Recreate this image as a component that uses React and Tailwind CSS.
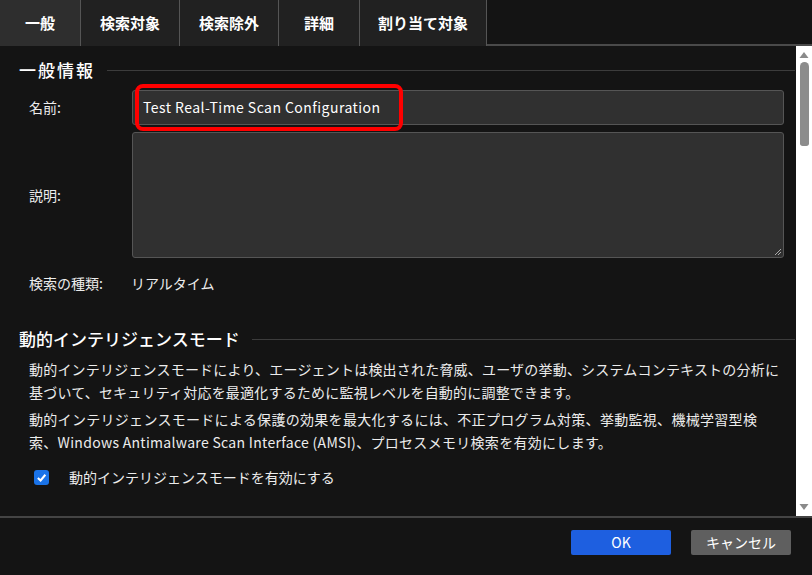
import React from "react";

const font = { fontFamily: '"Noto Sans CJK JP", "Noto Sans", sans-serif' };

function Tab({ label, active, w }) {
  return (
    <div
      className={`flex items-center justify-center h-full text-[15px] font-bold text-white border-r border-[#555] ${
        active ? "bg-[#2e2e2e]" : "bg-[#212121]"
      } ${w}`}
    >
      {label}
    </div>
  );
}

function SectionHeading({ children, wide }) {
  return (
    <div className="flex items-center pl-[19px] pr-[1px]">
      <span className={`text-[17px] font-medium text-white leading-[24px] ${wide ? "tracking-[2px]" : ""}`}>{children}</span>
      <div className="flex-1 h-px bg-[#3c3c3c] ml-[12px]" />
    </div>
  );
}

export default function App() {
  return (
    <div className="w-[812px] h-[575px] bg-[#141414] text-[#ececec] flex flex-col overflow-hidden" style={font}>
      {/* Tabs */}
      <div className="flex h-[46px] shrink-0">
        <div className="flex h-full">
          <Tab label="一般" active w="w-[81px]" />
          <Tab label="検索対象" w="w-[99px]" />
          <Tab label="検索除外" w="w-[99px]" />
          <Tab label="詳細" w="w-[81px]" />
          <Tab label="割り当て対象" w="w-[127px]" />
        </div>
        <div className="flex-1 border-b-2 border-[#4a4a4a]" />
      </div>

      {/* Content + scrollbar */}
      <div className="flex flex-1 min-h-0">
        <div className="flex-1 relative pt-[12px]">
          <SectionHeading wide>一般情報</SectionHeading>

          <div className="flex items-center mt-[8px] pl-[29px] pr-[12px]">
            <div className="w-[103px] text-[14px]">名前:</div>
            <div className="flex-1 h-[35px] bg-[#303030] border border-[#555] rounded-[3px] flex items-center pl-[10px] text-[14px] text-white tracking-[0.45px]">
              Test Real-Time Scan Configuration
            </div>
          </div>

          <div className="flex items-center mt-[7px] pl-[29px] pr-[12px]">
            <div className="w-[103px] text-[14px]">説明:</div>
            <div className="flex-1 h-[126px] bg-[#303030] border border-[#555] rounded-[3px] relative">
              <svg className="absolute right-[1px] bottom-[1px]" width="9" height="9" viewBox="0 0 9 9">
                <path d="M8 2 L2 8 M8 5 L5 8" stroke="#aaa" strokeWidth="1" />
              </svg>
            </div>
          </div>

          <div className="flex items-center mt-[15px] pl-[29px] text-[14px] leading-[20px]">
            <div className="w-[102px]">検索の種類:</div>
            <div>リアルタイム</div>
          </div>

          <div className="mt-[34px]">
            <SectionHeading>動的インテリジェンスモード</SectionHeading>
          </div>

          <div className="pl-[29px] pr-[4px] mt-[7px] text-[14px] leading-[23px] tracking-[0.2px]">
            <p>
              動的インテリジェンスモードにより、エージェントは検出された脅威、ユーザの挙動、システムコンテキストの分析に
              <br />
              基づいて、セキュリティ対応を最適化するために監視レベルを自動的に調整できます。
            </p>
            <p className="mt-[4px] tracking-[0.3px]">
              動的インテリジェンスモードによる保護の効果を最大化するには、不正プログラム対策、挙動監視、機械学習型検
              <br />
              索、Windows Antimalware Scan Interface (AMSI)、プロセスメモリ検索を有効にします。
            </p>
          </div>

          <div className="flex items-center mt-[13px] pl-[34px] text-[14px]">
            <div className="w-[15px] h-[15px] rounded-[3px] bg-[#1a73e8] flex items-center justify-center">
              <svg width="11" height="11" viewBox="0 0 12 12">
                <path d="M2 6.5 L5 9.2 L10.2 3" fill="none" stroke="white" strokeWidth="2.2" />
              </svg>
            </div>
            <span className="ml-[20px]">動的インテリジェンスモードを有効にする</span>
          </div>

          {/* red highlight */}
          <div className="absolute left-[135px] top-[38px] w-[268px] h-[47px] border-[4px] border-[#ff0000] rounded-[8px] pointer-events-none" />
        </div>

        {/* scrollbar */}
        <div className="w-[16px] bg-white flex flex-col items-center">
          <svg className="mt-[5px]" width="10" height="8" viewBox="0 0 10 8">
            <path d="M5 1 L9.5 7 L0.5 7 Z" fill="#8a8a8a" />
          </svg>
          <div className="mt-[3px] w-[9px] h-[84px] bg-[#8c8c8c] rounded-t-[5px] rounded-b-[3px]" />
          <div className="flex-1" />
          <svg className="mb-[5px]" width="10" height="8" viewBox="0 0 10 8">
            <path d="M0.5 1 L9.5 1 L5 7 Z" fill="#8a8a8a" />
          </svg>
        </div>
      </div>

      {/* divider + footer */}
      <div className="h-[2px] bg-[#444] shrink-0" />
      <div className="h-[57px] shrink-0 flex items-start justify-end pt-[12px] pr-[21px] gap-[20px]">
        <button className="w-[100px] h-[25px] rounded-[2px] bg-[#1e5fe0] text-white text-[14px]">OK</button>
        <button className="w-[100px] h-[25px] rounded-[2px] bg-[#5f5f5f] text-white text-[14px]">キャンセル</button>
      </div>
    </div>
  );
}
